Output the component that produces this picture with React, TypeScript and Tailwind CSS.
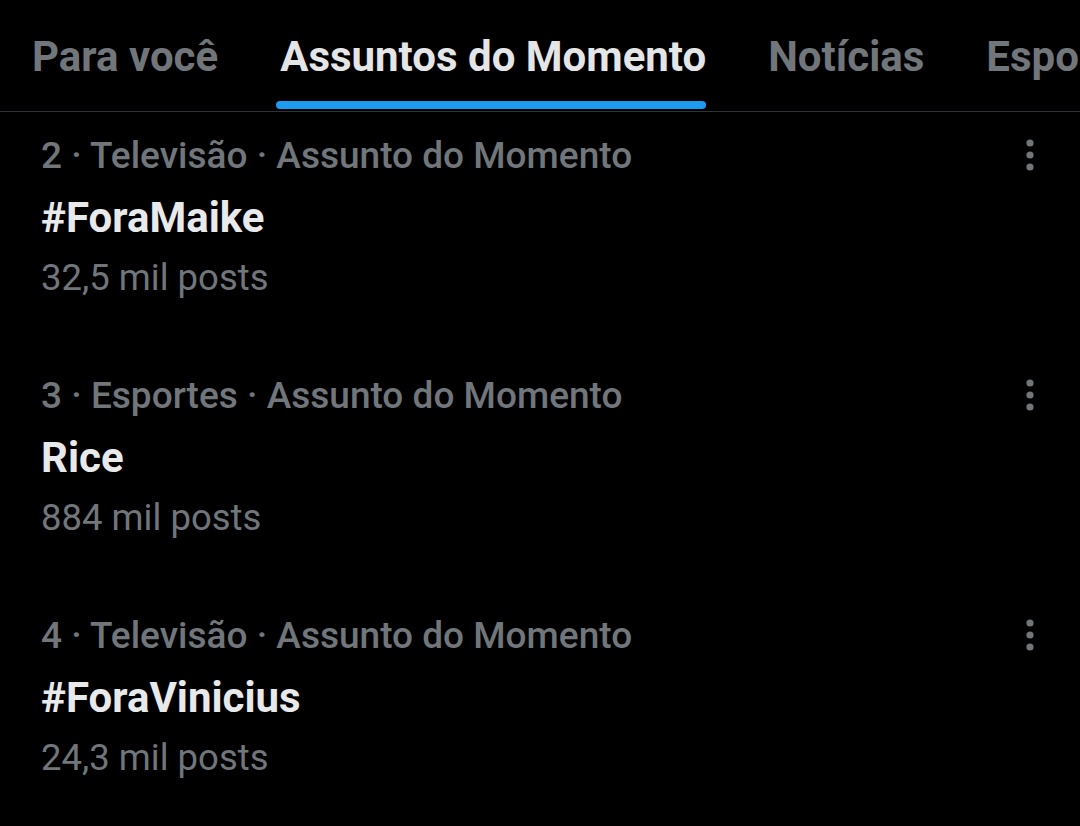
import React from "react"

const tabs = ["Para você", "Assuntos do Momento", "Notícias", "Esportes"]

const trends = [
  { rank: 2, category: "Televisão", title: "#ForaMaike", posts: "32,5 mil posts" },
  { rank: 3, category: "Esportes", title: "Rice", posts: "884 mil posts" },
  { rank: 4, category: "Televisão", title: "#ForaVinicius", posts: "24,3 mil posts" },
]

function Dots() {
  return (
    <svg width="14" height="36" viewBox="0 0 14 36" className="fill-[#71767b]">
      <circle cx="7" cy="6" r="3.6" />
      <circle cx="7" cy="18" r="3.6" />
      <circle cx="7" cy="30" r="3.6" />
    </svg>
  )
}

export default function App() {
  return (
    <div className="w-[1080px] h-[826px] overflow-hidden bg-black font-['Roboto',sans-serif]">
      <div className="flex h-[112px] border-b border-[#2f3336] pl-[32px] gap-[62px] whitespace-nowrap">
        {tabs.map((t, i) => (
          <div key={t} className="relative flex h-full items-center pt-[2px]">
            <span
              className={`text-[42px] font-bold ${i === 1 ? "text-[#e3e5e6]" : "text-[#71767b]"}`}
            >
              {t}
            </span>
            {i === 1 && (
              <div className="absolute bottom-[2px] left-[-4px] right-0 h-[8px] rounded-full bg-[#1d9bf0]" />
            )}
          </div>
        ))}
      </div>

      <div className="flex flex-col whitespace-nowrap">
        {trends.map((tr) => (
          <div key={tr.rank} className="flex h-[240px] pl-[41px] pr-[43px] pt-[22px]">
            <div className="flex flex-1 flex-col">
              <div className="text-[37px] font-medium leading-[44px] text-[#71767b]">
                {tr.rank} · {tr.category} · Assunto do Momento
              </div>
              <div className="mt-[18px] text-[42px] font-bold leading-[44px] text-[#e7e9ea]">
                {tr.title}
              </div>
              <div className="mt-[16px] text-[36.5px] leading-[44px] text-[#71767b]">{tr.posts}</div>
            </div>
            <div className="pt-[3px]">
              <Dots />
            </div>
          </div>
        ))}
      </div>
    </div>
  )
}
